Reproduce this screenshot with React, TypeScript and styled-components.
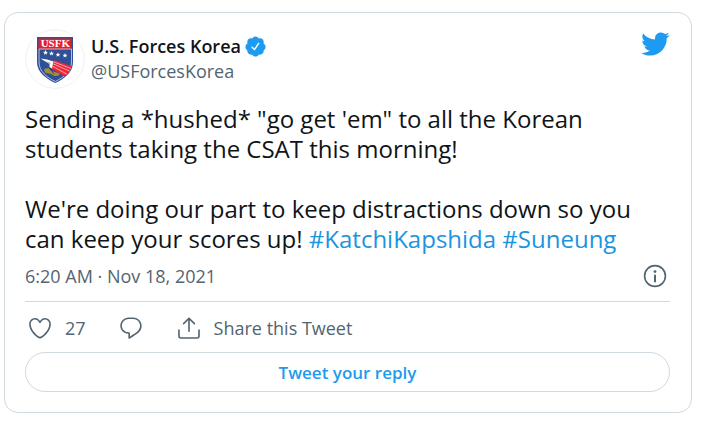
import React from "react";
import styled, { createGlobalStyle } from "styled-components";

const GlobalStyle = createGlobalStyle`
  *, *::before, *::after { box-sizing: border-box; }
  body {
    margin: 0;
    background: #fff;
    color: #0f1419;
    font-family: "Open Sans", "Noto Sans", sans-serif;
    font-weight: 400;
  }
`;

const Page = styled.main`
  padding: 12px 24px 10px 4px;
`;

const Card = styled.article`
  padding: 16px 21px 20px 20px;
  border: 1px solid #cfd9de;
  border-radius: 14px;
`;

const Header = styled.header`
  display: flex;
  align-items: flex-start;
`;

const AvatarLink = styled.a`
  display: block;
  width: 60px;
  height: 60px;
  margin-right: 6px;
`;

const Author = styled.div`
  flex: 1;
  padding-top: 5px;
`;

const NameLink = styled.a`
  display: flex;
  align-items: center;
  gap: 3px;
  color: #0f1419;
  font-size: 18px;
  font-weight: 600;
  line-height: 25px;
  text-decoration: none;
`;

const HandleLink = styled.a`
  display: block;
  color: #536471;
  font-size: 18px;
  line-height: 25px;
  text-decoration: none;
`;

const IconLink = styled.a<{ $color: string }>`
  display: block;
  line-height: 0;
  color: ${({ $color }) => $color};
`;

const Icon = styled.svg<{ $size: number; $color?: string }>`
  display: block;
  flex: none;
  width: ${({ $size }) => $size}px;
  height: ${({ $size }) => $size}px;
  color: ${({ $color }) => $color ?? "inherit"};
  fill: currentColor;
`;

const Body = styled.p`
  margin: 15px 0 0;
  font-size: 24px;
  line-height: 30px;
  white-space: pre-line;
`;

const Hashtag = styled.a`
  color: #1b95e0;
  text-decoration: none;
`;

const Meta = styled.div`
  display: flex;
  align-items: center;
  justify-content: space-between;
  height: 48px;
  padding: 0 3px 4px 0;
  border-bottom: 1px solid #cfd9de;
`;

const DateLink = styled.a`
  color: #536471;
  font-size: 18px;
  line-height: 24px;
  text-decoration: none;
`;

const Actions = styled.div`
  display: flex;
  align-items: center;
  gap: 32px;
  height: 50px;
  padding: 2px 0 0 2px;
`;

const Action = styled.a`
  display: flex;
  align-items: center;
  gap: 12px;
  color: #536471;
  font-size: 18px;
  line-height: 26px;
  text-decoration: none;
`;

const ReplyButton = styled.button`
  display: block;
  width: 100%;
  height: 40px;
  padding: 2px 16px 0;
  border: 1px solid #cfd9de;
  border-radius: 20px;
  background: #fff;
  color: #1d9bf0;
  font: inherit;
  font-size: 17px;
  font-weight: 600;
  line-height: 24px;
  cursor: pointer;
`;

const paths = {
  bird: "M23.643 4.937c-.835.37-1.732.62-2.675.733.962-.576 1.7-1.49 2.048-2.578-.9.534-1.897.922-2.958 1.13-.85-.904-2.06-1.47-3.4-1.47-2.572 0-4.658 2.086-4.658 4.66 0 .364.042.718.12 1.06-3.873-.195-7.304-2.05-9.602-4.868-.4.69-.63 1.49-.63 2.342 0 1.616.823 3.043 2.072 3.878-.764-.025-1.482-.234-2.11-.583v.06c0 2.257 1.605 4.14 3.737 4.568-.392.106-.803.162-1.227.162-.3 0-.593-.028-.877-.082.593 1.85 2.313 3.198 4.352 3.234-1.595 1.25-3.604 1.995-5.786 1.995-.376 0-.747-.022-1.112-.065 2.062 1.323 4.51 2.093 7.14 2.093 8.57 0 13.255-7.098 13.255-13.254 0-.2-.005-.402-.014-.602.91-.658 1.7-1.477 2.323-2.41z",
  verified:
    "M22.5 12.5c0-1.58-.875-2.95-2.148-3.6.154-.435.238-.905.238-1.4 0-2.21-1.71-3.998-3.818-3.998-.47 0-.92.084-1.336.25C14.818 2.415 13.51 1.5 12 1.5s-2.816.917-3.437 2.25c-.415-.165-.866-.25-1.336-.25-2.11 0-3.818 1.79-3.818 4 0 .494.083.964.237 1.4-1.272.65-2.147 2.018-2.147 3.6 0 1.495.782 2.798 1.942 3.486-.02.17-.032.34-.032.514 0 2.21 1.708 4 3.818 4 .47 0 .92-.086 1.335-.25.62 1.334 1.926 2.25 3.437 2.25 1.512 0 2.818-.916 3.437-2.25.415.163.865.248 1.336.248 2.11 0 3.818-1.79 3.818-4 0-.174-.012-.344-.033-.513 1.158-.687 1.943-1.99 1.943-3.484zm-6.616-3.334l-4.334 6.5c-.145.217-.382.334-.625.334-.143 0-.288-.04-.416-.126l-.115-.094-2.415-2.415c-.293-.293-.293-.768 0-1.06s.768-.294 1.06 0l1.77 1.767 3.825-5.74c.23-.345.696-.436 1.04-.207.346.23.44.696.21 1.04z",
  heart:
    "M12 21.638h-.014C9.403 21.59 1.95 14.856 1.95 8.478c0-3.064 2.525-5.754 5.403-5.754 2.29 0 3.83 1.58 4.646 2.73.814-1.148 2.354-2.73 4.645-2.73 2.88 0 5.404 2.69 5.404 5.755 0 6.376-7.454 13.11-10.037 13.157H12zM7.354 4.225c-2.08 0-3.903 1.988-3.903 4.255 0 5.74 7.034 11.596 8.55 11.658 1.518-.062 8.55-5.917 8.55-11.658 0-2.267-1.823-4.255-3.903-4.255-2.528 0-3.94 2.936-3.952 2.965-.23.562-1.156.562-1.387 0-.014-.03-1.425-2.965-3.954-2.965z",
  reply:
    "M14.046 2.242l-4.148-.01h-.002c-4.374 0-7.8 3.427-7.8 7.802 0 4.098 3.186 7.206 7.465 7.37v3.828c0 .108.044.286.12.403.142.225.384.347.632.347.138 0 .277-.038.402-.118.264-.168 6.473-4.14 8.088-5.506 1.902-1.61 3.04-3.97 3.043-6.312v-.017c-.006-4.367-3.43-7.787-7.8-7.788zm3.787 12.972c-1.134.96-4.862 3.405-6.772 4.643V16.67c0-.414-.335-.75-.75-.75h-.396c-3.66 0-6.318-2.476-6.318-5.886 0-3.534 2.768-6.302 6.3-6.302l4.147.01h.002c3.532 0 6.3 2.766 6.302 6.296-.003 1.91-.942 3.844-2.514 5.176z",
  share:
    "M17.53 7.47l-5-5c-.293-.293-.768-.293-1.06 0l-5 5c-.294.293-.294.768 0 1.06s.767.294 1.06 0l3.72-3.72V15c0 .414.336.75.75.75s.75-.336.75-.75V4.81l3.72 3.72c.146.147.338.22.53.22s.384-.072.53-.22c.293-.293.293-.767 0-1.06z M19.708 21.944H4.292C3.028 21.944 2 20.916 2 19.652V14c0-.414.336-.75.75-.75s.75.336.75.75v5.652c0 .437.355.792.792.792h15.416c.437 0 .792-.355.792-.792V14c0-.414.336-.75.75-.75s.75.336.75.75v5.652c0 1.264-1.028 2.292-2.292 2.292z",
};

type GlyphProps = { name: keyof typeof paths; size: number; color?: string };

const Glyph = ({ name, size, color }: GlyphProps) => (
  <Icon $size={size} $color={color} viewBox="0 0 24 24" aria-hidden="true">
    <path d={paths[name]} />
  </Icon>
);

const InfoGlyph = () => (
  <Icon $size={24} viewBox="0 0 24 24" aria-hidden="true">
    <circle cx="12" cy="12" r="10.4" fill="none" stroke="currentColor" strokeWidth="1.6" />
    <circle cx="12" cy="7.6" r="1.4" />
    <rect x="11" y="10.4" width="2" height="8" rx="0.8" />
  </Icon>
);

const stars = [
  [20.5, 23.5],
  [26.5, 24.4],
  [33, 25.6],
  [40, 26.4],
];

const Emblem = () => (
  <Icon $size={60} viewBox="0 0 60 60" aria-hidden="true">
    <defs>
      <clipPath id="shield">
        <path d="M13 8.5H47.5V33C47.5 43 39 49.5 30.3 53.5C21.5 49.5 13 43 13 33Z" />
      </clipPath>
    </defs>
    <circle cx="30" cy="30" r="29.3" fill="#fff" stroke="#e6eaed" strokeWidth="0.7" />
    <path d="M12 8H48V33C48 43.5 39 50 30.3 54C21.5 50 12 43.5 12 33Z" fill="#2f4f96" />
    <g clipPath="url(#shield)">
      <path d="M13.5 9.5H46.5V20H13.5Z" fill="#e3202d" />
      <path
        d="M14 20V33C14 42.5 22 48.5 30.3 52.5C38.5 48.5 46.5 42.5 46.5 33V20Z"
        fill="none"
        stroke="#d3dcea"
        strokeWidth="0.8"
      />
      <path d="M28.5 31L46 37V44L41.5 48.5L26.5 39.5Z" fill="#ee2635" />
      <path
        d="M29 33L46 39.5M28.5 35L45.5 42.5M28 37.5L43.5 46"
        stroke="#fff"
        strokeWidth="0.6"
        fill="none"
      />
      <path d="M15.5 29.5L22 30.5L28.5 32.5L27 39.5L24.5 38L24.5 35Z" fill="#fff" />
      <path d="M18.5 31.5L26 34L24.5 35Z" fill="#9aa9bf" />
      <path
        d="M19 40L23.5 39L26 42L30 43L34.5 44.5L34 46.5L29.5 47L26 45L20 43.5Z"
        fill="#a58d32"
      />
      <path d="M25 39L29 45" stroke="#2a3f5c" strokeWidth="0.8" />
    </g>
    {stars.map(([x, y]) => (
      <path
        key={x}
        transform={`translate(${x} ${y})`}
        d="M0-2.4L.7-.7L2.4-.6L1.1 .5L1.5 2.2L0 1.2L-1.5 2.2L-1.1 .5L-2.4-.6L-.7-.7Z"
        fill="#fff"
      />
    ))}
    <text
      x="30.3"
      y="18.2"
      textAnchor="middle"
      fill="#fff"
      fontFamily="Liberation Serif, serif"
      fontWeight="700"
      fontSize="11"
    >
      USFK
    </text>
  </Icon>
);

export default function App() {
  return (
    <>
      <GlobalStyle />
      <Page>
        <Card>
          <Header>
            <AvatarLink href="#profile" aria-label="U.S. Forces Korea profile">
              <Emblem />
            </AvatarLink>
            <Author>
              <NameLink href="#profile">
                U.S. Forces Korea
                <Glyph name="verified" size={23} color="#1d9bf0" />
              </NameLink>
              <HandleLink href="#profile">@USForcesKorea</HandleLink>
            </Author>
            <IconLink href="#tweet" $color="#1d9bf0" aria-label="View on Twitter">
              <Glyph name="bird" size={30} />
            </IconLink>
          </Header>
          <Body>
            {"Sending a *hushed* \"go get 'em\" to all the Korean students taking the CSAT this morning!\n\nWe're doing our part to keep distractions down so you can keep your scores up! "}
            <Hashtag href="#KatchiKapshida">#KatchiKapshida</Hashtag>{" "}
            <Hashtag href="#Suneung">#Suneung</Hashtag>
          </Body>
          <Meta>
            <DateLink href="#tweet">
              <time dateTime="2021-11-18T06:20">6:20 AM · Nov 18, 2021</time>
            </DateLink>
            <IconLink href="#info" $color="#536471" aria-label="Twitter Ads info and privacy">
              <InfoGlyph />
            </IconLink>
          </Meta>
          <Actions>
            <Action href="#like" aria-label="Like, 27 likes">
              <Glyph name="heart" size={26} />
              27
            </Action>
            <Action href="#reply" aria-label="Reply">
              <Glyph name="reply" size={26} />
            </Action>
            <Action href="#share">
              <Glyph name="share" size={26} />
              Share this Tweet
            </Action>
          </Actions>
          <ReplyButton type="button">Tweet your reply</ReplyButton>
        </Card>
      </Page>
    </>
  );
}
